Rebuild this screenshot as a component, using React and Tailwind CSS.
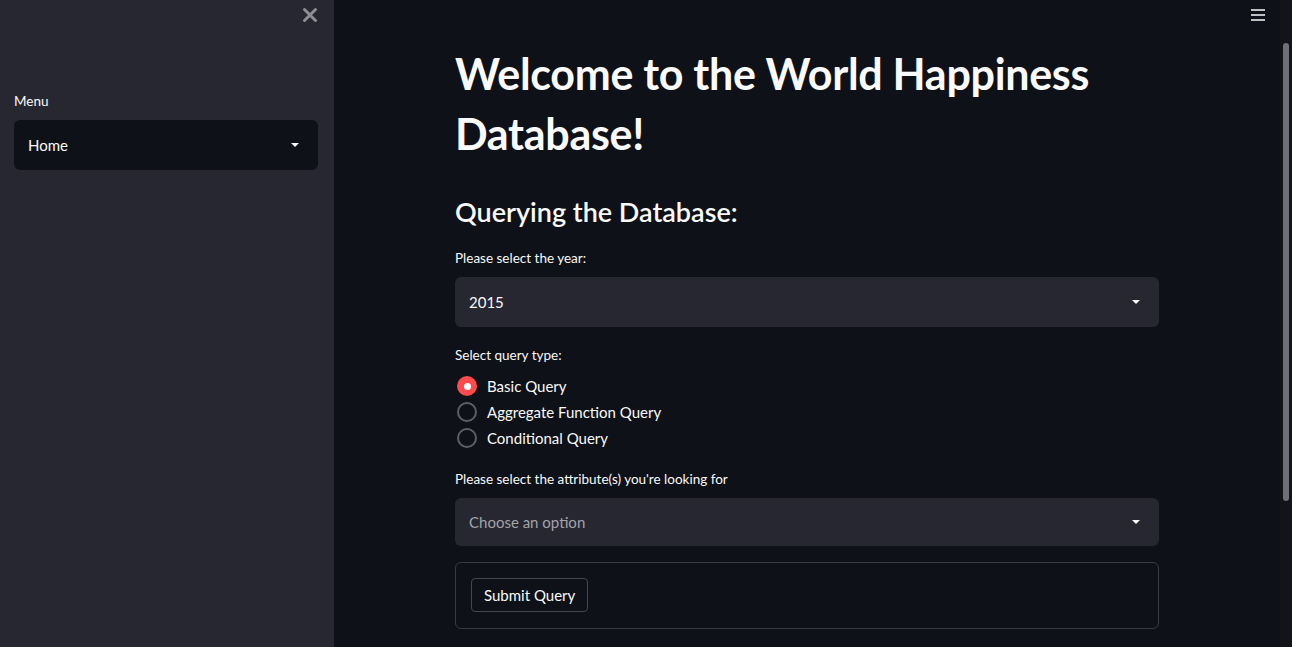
import React from "react";

const font = { fontFamily: "Lato, 'Noto Sans', sans-serif" };

function Caret() {
  return (
    <svg width="10" height="6" viewBox="0 0 10 6" className="shrink-0">
      <path d="M1 1h8L5 5z" fill="#fafafa" />
    </svg>
  );
}

function Select({ value, placeholder, dark, h = "h-[50px]" }) {
  return (
    <div
      className={`${h} w-full rounded-md flex items-center justify-between pl-[14px] pr-[18px] ${
        dark ? "bg-[#0e1117]" : "bg-[#262730]"
      }`}
    >
      <span className={`text-[15px] ${placeholder ? "text-[#a3a3aa]" : "text-[#fafafa]"}`}>
        {value}
      </span>
      <Caret />
    </div>
  );
}

function Radio({ label, checked }) {
  return (
    <div className="flex items-center h-[26px] gap-[10px]">
      {checked ? (
        <div className="w-[20px] h-[20px] rounded-full bg-[#ff4b4b] flex items-center justify-center ml-[2px]">
          <div className="w-[7px] h-[7px] rounded-full bg-white" />
        </div>
      ) : (
        <div className="w-[20px] h-[20px] rounded-full border-2 border-[#5d5f66] ml-[2px]" />
      )}
      <span className="text-[15px] text-[#fafafa]">{label}</span>
    </div>
  );
}

export default function App() {
  return (
    <div className="flex w-[1292px] h-[647px] overflow-hidden bg-[#0e1117] text-[#fafafa]" style={font}>
      {/* Sidebar */}
      <aside className="w-[334px] shrink-0 bg-[#262730] flex flex-col pl-[14px] pr-[16px]">
        <div className="flex justify-end pt-[7px] h-[90px]">
          <svg width="16" height="16" viewBox="0 0 16 16">
            <path d="M2.5 2.5l11 11M13.5 2.5l-11 11" stroke="#8e8f96" strokeWidth="3" strokeLinecap="round" />
          </svg>
        </div>
        <div className="text-[13.5px] leading-[20px] mb-[9px] mt-[1px]">Menu</div>
        <Select value="Home" dark h="h-[50px]" />
      </aside>

      {/* Main */}
      <main className="flex-1 flex min-w-0">
        <div className="flex-1 flex flex-col items-center relative">
          <div className="absolute right-[14px] top-[8px]">
            <svg width="16" height="14" viewBox="0 0 16 14">
              <path d="M1 2h14M1 7h14M1 12h14" stroke="#fafafa" strokeWidth="1.6" />
            </svg>
          </div>
          <div className="w-[704px] flex flex-col pt-[44px]">
            <h1 className="text-[43px] font-bold leading-[60px] tracking-[-0.3px]">
              Welcome to the World Happiness Database!
            </h1>
            <h3 className="text-[27px] font-semibold leading-[36px] mt-[30px]">Querying the Database:</h3>
            <div className="text-[13.5px] leading-[20px] mt-[18px]">Please select the year:</div>
            <div className="mt-[9px]">
              <Select value="2015" />
            </div>
            <div className="text-[13.5px] leading-[20px] mt-[18px]">Select query type:</div>
            <div className="flex flex-col mt-[8px]">
              <Radio label="Basic Query" checked />
              <Radio label="Aggregate Function Query" />
              <Radio label="Conditional Query" />
            </div>
            <div className="text-[13.5px] leading-[20px] mt-[18px]">
              Please select the attribute(s) you're looking for
            </div>
            <div className="mt-[9px]">
              <Select value="Choose an option" placeholder h="h-[48px]" />
            </div>
            <div className="mt-[16px] border border-[#3a3b40] rounded-md h-[67px] px-[15px] pt-[15px]">
              <button className="h-[34px] px-[12px] rounded border border-[#45464c] text-[15px] text-[#fafafa] bg-[#0e1117]">
                Submit Query
              </button>
            </div>
          </div>
        </div>
        {/* scrollbar */}
        <div className="w-[12px] shrink-0 bg-[#131419] pt-[43px] flex justify-center">
          <div className="w-[6px] h-[458px] rounded-full bg-[#6f7075]" />
        </div>
      </main>
    </div>
  );
}
